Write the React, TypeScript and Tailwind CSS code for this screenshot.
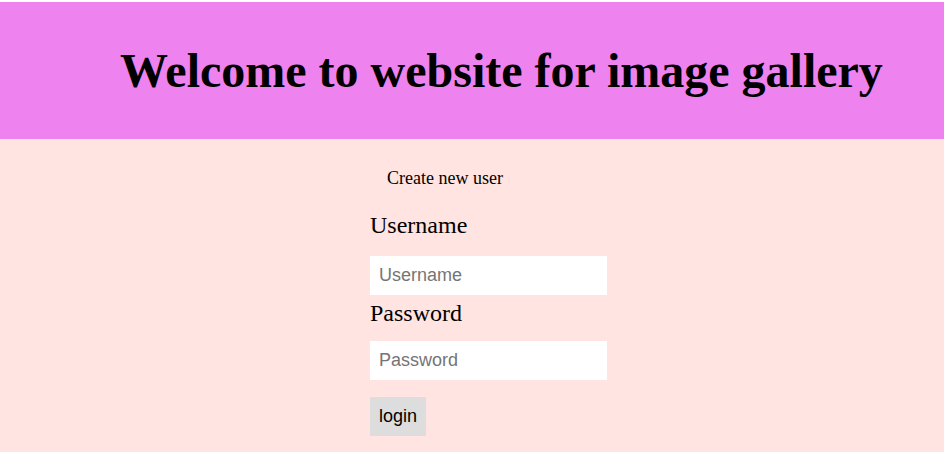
export default function App() {
  return (
    <div className="bg-white pt-[2px] font-['Liberation_Serif',serif] text-black">
      {/* Header */}
      <div className="bg-[#ee82ee] pl-[120px] pt-[41px] pb-[40px]">
        <h1 className="text-[48px] leading-[56px] font-bold whitespace-nowrap">
          Welcome to website for image gallery
        </h1>
      </div>

      {/* Login form */}
      <div className="bg-[#ffe4e1] h-[313px] pl-[370px] pt-[29px]">
        <p className="pl-[17px] text-[18px] leading-[21px]">Create new user</p>
        <form className="flex flex-col items-start mt-[22px]" onSubmit={e => e.preventDefault()}>
          <label className="text-[24px] leading-[28px]">Username</label>
          <input
            type="text"
            placeholder="Username"
            className="mt-[17px] w-[237px] h-[39px] bg-white px-[9px] text-[18px] font-['Liberation_Sans',Arial,sans-serif] placeholder:text-[#757575] outline-none"
          />
          <label className="mt-[4px] text-[24px] leading-[28px]">Password</label>
          <input
            type="password"
            placeholder="Password"
            className="mt-[14px] w-[237px] h-[39px] bg-white px-[9px] text-[18px] font-['Liberation_Sans',Arial,sans-serif] placeholder:text-[#757575] outline-none"
          />
          <button
            type="submit"
            className="mt-[17px] h-[39px] px-[9px] bg-[#dddddd] text-[18px] font-['Liberation_Sans',Arial,sans-serif]"
          >
            login
          </button>
        </form>
      </div>
    </div>
  );
}
